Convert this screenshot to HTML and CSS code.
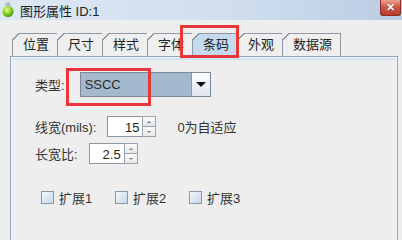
FILE: index.html
```html
<!DOCTYPE html>
<html lang="zh-CN">
<head>
    <meta charset="UTF-8">
    <title>图形属性 ID:1</title>
    <link rel="stylesheet" href="styles.css">
</head>
<body>
    <div class="window">
        <div class="titlebar">
            <svg class="app-icon" width="12" height="16" viewBox="0 0 12 16">
                <defs>
                    <radialGradient id="ball" cx="0.4" cy="0.35" r="0.7">
                        <stop offset="0" stop-color="#e6ff9a"/>
                        <stop offset="0.5" stop-color="#8fd62a"/>
                        <stop offset="1" stop-color="#3f8a0c"/>
                    </radialGradient>
                </defs>
                <rect x="4" y="1" width="4" height="3" rx="1" fill="#c9c9c9" stroke="#888" stroke-width="0.6"/>
                <circle cx="6" cy="9.5" r="5.5" fill="url(#ball)"/>
            </svg>
            <span class="title">图形属性 ID:1</span>
            <button class="close-btn">&#x2715;</button>
        </div>

        <div class="body">
            <div class="tabs">
                <div class="tab">位置</div>
                <div class="tab">尺寸</div>
                <div class="tab">样式</div>
                <div class="tab">字体</div>
                <div class="tab active">条码<span class="mark mark-tab"></span></div>
                <div class="tab">外观</div>
                <div class="tab">数据源</div>
            </div>

            <div class="panel">
                <div class="row row-type">
                    <span class="label">类型:</span>
                    <div class="combo">
                        <span class="combo-value">SSCC</span>
                        <span class="combo-arrow"></span>
                        <span class="mark mark-combo"></span>
                    </div>
                </div>

                <div class="row row-width">
                    <span class="label">线宽(mils):</span>
                    <div class="spinner">
                        <span class="spin-field">15</span>
                        <span class="spin-btns"><span class="up"></span><span class="down"></span></span>
                    </div>
                    <span class="hint">0为自适应</span>
                </div>

                <div class="row row-ratio">
                    <span class="label">长宽比:</span>
                    <div class="spinner">
                        <span class="spin-field">2.5</span>
                        <span class="spin-btns"><span class="up"></span><span class="down"></span></span>
                    </div>
                </div>

                <div class="row row-checks">
                    <label class="check"><span class="box"></span>扩展1</label>
                    <label class="check"><span class="box"></span>扩展2</label>
                    <label class="check"><span class="box"></span>扩展3</label>
                </div>
            </div>
        </div>
    </div>
</body>
</html>
```

FILE: styles.css
```css
body {
    margin: 0;
    background: #eeeeee;
    font-family: "Liberation Sans", "Noto Sans CJK SC", sans-serif;
    font-size: 13px;
    color: #333;
}
.window {
    width: 402px;
    height: 240px;
    overflow: hidden;
}

/* title bar */
.titlebar {
    height: 20px;
    display: flex;
    align-items: center;
    background: linear-gradient(90deg, #dde8f4, #cfddee 60%, #b9cde4);
}
.app-icon {
    margin: 0 6px 0 2px;
}
.title {
    font-size: 13px;
    color: #1e1e1e;
    flex: 1;
}
.close-btn {
    align-self: flex-start;
    width: 21px;
    height: 16px;
    margin-right: 1px;
    padding: 0;
    border: 1px solid #8b2d24;
    border-top: none;
    border-radius: 0 0 3px 3px;
    background: linear-gradient(#e9a08f, #cd5443 50%, #b8392a);
    color: #fff;
    font-size: 11px;
    font-weight: bold;
    line-height: 15px;
    text-shadow: 0 0 1px #5a1a12;
}

/* tabs */
.body {
    padding: 13px 4px 0 10px;
}
.tabs {
    display: flex;
    margin-left: 2px;
    height: 23px;
}
.tab {
    position: relative;
    height: 22px;
    padding: 0 8px 0 10px;
    border: 1px solid #8e97a2;
    border-bottom: none;
    background: #efefef;
    color: #222;
    line-height: 22px;
    margin-right: -1px;
}
.tab::before {
    content: "";
    position: absolute;
    left: -1px;
    top: -1px;
    width: 7px;
    height: 7px;
    background: linear-gradient(to bottom right, #eeeeee 46%, #8e97a2 46%, #8e97a2 60%, transparent 60%);
}
.tab.active {
    background: #c6daee;
    z-index: 1;
}
.mark {
    position: absolute;
    border: 3px solid #e8363b;
    pointer-events: none;
}
.mark-tab {
    left: -13px;
    top: -9px;
    right: -2px;
    bottom: -2px;
}

/* panel */
.panel {
    height: 200px;
    border: 1px solid #8fa4bb;
    box-shadow: inset 0 0 0 1px #f4f7fb, inset 0 3px 0 #d3e2f1;
    padding: 15px 0 0 24px;
}
.row {
    display: flex;
    align-items: center;
}
.label {
    margin-right: 11px;
}
.row-type {
    height: 25px;
}
.row-type .label {
    margin-right: 15px;
}
.combo {
    position: relative;
    display: flex;
    width: 129px;
    height: 23px;
    border: 1px solid #7a8896;
}
.combo-value {
    flex: 1;
    background: #a4b9cd;
    padding-left: 4px;
    line-height: 23px;
    font-size: 13px;
    color: #2b2b2b;
}
.combo-arrow {
    width: 18px;
    border-left: 1px solid #8a98a6;
    background: linear-gradient(#ffffff, #dfe6ee);
    display: flex;
    align-items: center;
    justify-content: center;
}
.combo-arrow::after {
    content: "";
    border-left: 5px solid transparent;
    border-right: 5px solid transparent;
    border-top: 5px solid #111;
}
.mark-combo {
    left: -15px;
    top: -5px;
    width: 79px;
    height: 32px;
}

.row-width {
    height: 21px;
    margin-top: 19px;
}
.row-ratio {
    height: 21px;
    margin-top: 6px;
}
.spinner {
    display: flex;
    height: 21px;
}
.spin-field {
    width: 31px;
    border: 1px solid #8c97a1;
    border-right: none;
    background: #fff;
    text-align: right;
    padding-right: 3px;
    line-height: 21px;
    color: #222;
}
.spin-btns {
    display: flex;
    flex-direction: column;
    width: 12px;
    border: 1px solid #9aa4ae;
}
.spin-btns span {
    flex: 1;
    background: linear-gradient(#fafafa, #e3e7eb);
    display: flex;
    align-items: center;
    justify-content: center;
}
.spin-btns .up {
    border-bottom: 1px solid #9aa4ae;
}
.spin-btns .up::after {
    content: "";
    border-left: 2px solid transparent;
    border-right: 2px solid transparent;
    border-bottom: 2px solid #777;
}
.spin-btns .down::after {
    content: "";
    border-left: 2px solid transparent;
    border-right: 2px solid transparent;
    border-top: 2px solid #777;
}
.hint {
    margin-left: 21px;
}

.row-checks {
    margin-top: 27px;
    margin-left: 6px;
    height: 13px;
}
.check {
    display: flex;
    align-items: center;
    width: 74px;
}
.box {
    width: 11px;
    height: 11px;
    border: 1px solid #8799ad;
    background: linear-gradient(135deg, #f4f8fc, #c7d7e8);
    margin-right: 5px;
}
```
